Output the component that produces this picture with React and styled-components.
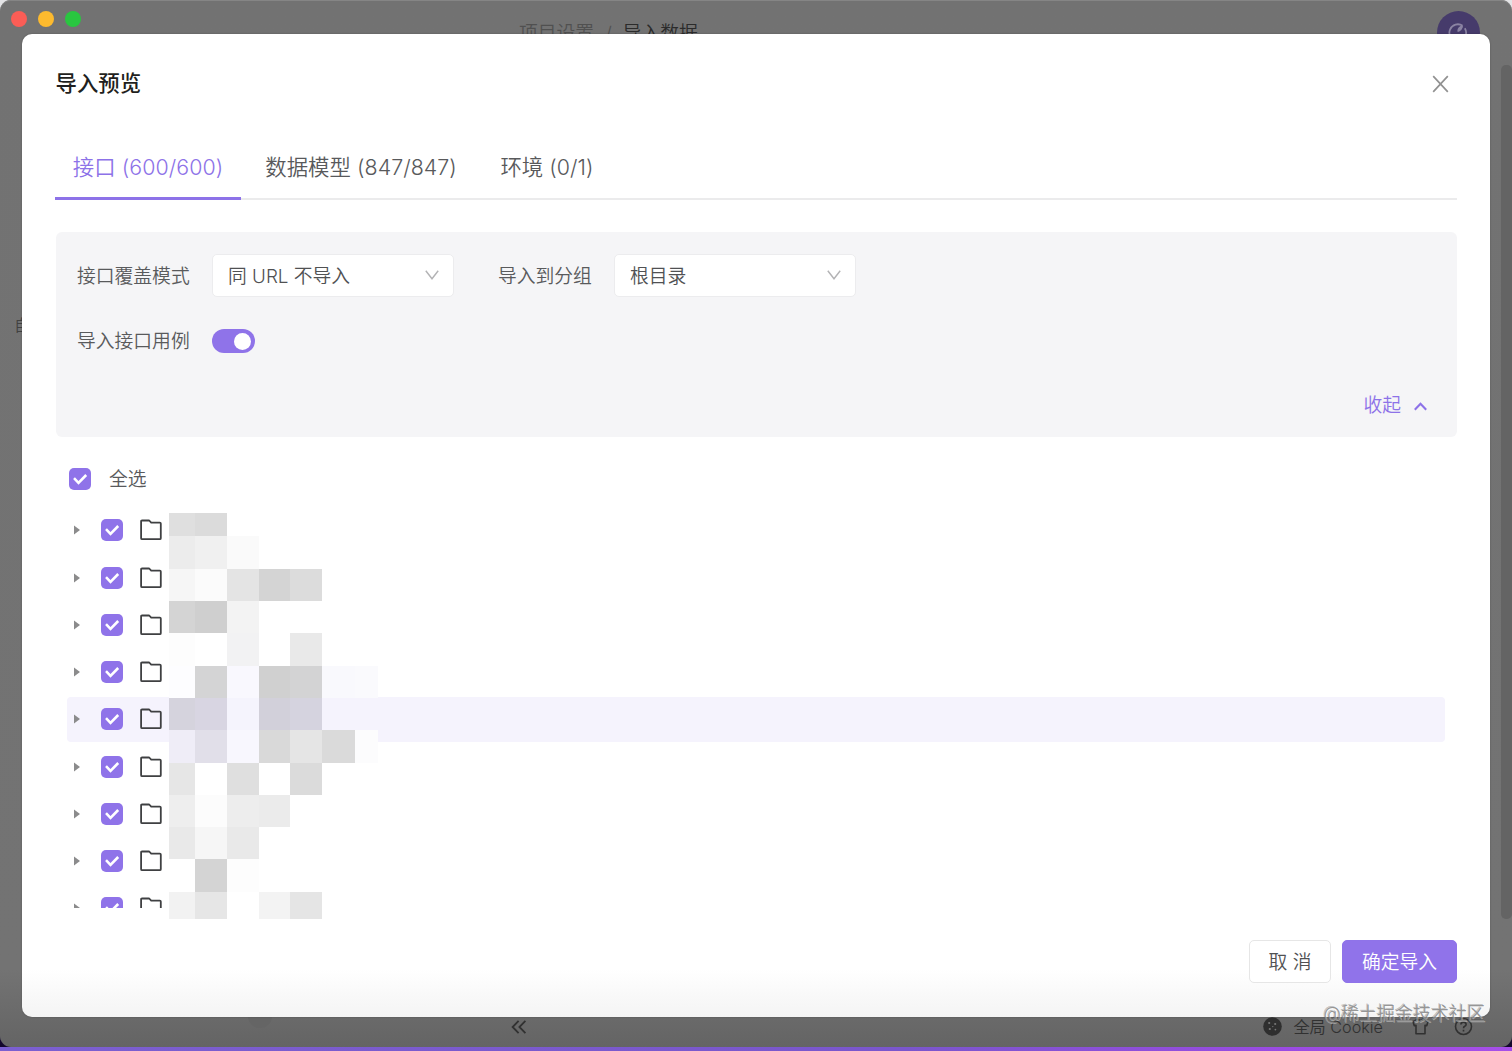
import React, { useState } from "react";
import styled, { createGlobalStyle } from "styled-components";

const GlobalStyle = createGlobalStyle`
  *, *::before, *::after { box-sizing: border-box; }
  body {
    margin: 0;
    background: #e4e4e6;
    color: #595a5c;
    font-family: Inter, "Noto Sans CJK SC", sans-serif;
    font-size: 18.8px;
    font-weight: 350;
    line-height: 28px;
    overflow: hidden;
  }
  button { font: inherit; color: inherit; margin: 0; cursor: pointer; }
  svg { display: block; flex: none; }
`;

const Desktop = styled.div`
  display: flex;
  flex-direction: column;
  width: 1512px;
  height: 1051px;
  background: linear-gradient(#e4e4e6 0 50%, #14082c 50%);
`;

const Window = styled.div`
  position: relative;
  display: flex;
  flex-direction: column;
  height: 1047px;
  border-radius: 11px;
  overflow: hidden;
  background: linear-gradient(#727272 0, #737373 970px, #646464 1047px);
  box-shadow: inset 0 1px 0 #858585;
`;

const DesktopEdge = styled.div`
  height: 4px;
  background: linear-gradient(90deg, #7b5fd0, #7a56cc 60%, #9a4be2 85%, #a64fe8);
`;

const TitleBar = styled.header`
  display: flex;
  align-items: flex-start;
  height: 65px;
  padding: 11px 32.5px 0 11px;
`;

const TrafficLights = styled.div`
  display: flex;
  gap: 11px;
  width: 508px;
`;

const Light = styled.span`
  width: 16px;
  height: 16px;
  border-radius: 50%;
  background: ${(p) => p.$color};
`;

const Breadcrumb = styled.nav`
  display: flex;
  gap: 11px;
  flex: 1;
  padding-top: 9px;
  color: #505050;
  white-space: pre;
`;

const Current = styled.span`
  color: #2b2b2b;
`;

const Avatar = styled.div`
  display: grid;
  place-items: center;
  width: 43px;
  height: 43px;
  border-radius: 50%;
  background: #463b6b;
  color: #8b84a3;
`;

const Workspace = styled.div`
  display: flex;
  justify-content: space-between;
  height: 854px;
`;

const SideLabel = styled.span`
  padding: 246px 0 0 14px;
  color: #414141;
  font-size: 16px;
`;

const Scrollbar = styled.div`
  width: 11px;
  border-radius: 5px;
  background: #646464;
`;

const StatusBar = styled.footer`
  display: flex;
  align-items: center;
  flex: 1;
  padding: 87px 39px 0 248px;
  color: #313131;
`;

const StatusDot = styled.span`
  width: 24px;
  height: 24px;
  margin: -22px 239px 0 0;
  border-radius: 50%;
  background: #656565;
`;

const StatusTools = styled.div`
  display: flex;
  align-items: center;
  margin-left: auto;
`;

const CookieLabel = styled.span`
  margin: 0 29px 0 11px;
  font-size: 16.2px;
`;

const HelpSlot = styled.span`
  margin-left: 25px;
`;

const Dialog = styled.section`
  position: absolute;
  top: 34px;
  left: 22px;
  display: flex;
  flex-direction: column;
  width: 1468px;
  height: 983px;
  padding: 34px 33px 34px 34px;
  border-radius: 10px;
  background: linear-gradient(#fff 0, #fff 935px, #f4f4f4 983px);
  box-shadow: 0 0 2px rgba(0, 0, 0, 0.25);
`;

const DialogHeader = styled.div`
  display: flex;
  align-items: center;
  justify-content: space-between;
  height: 31px;
  padding-right: 8px;
`;

const Title = styled.h1`
  margin: 0 0 2px -0.5px;
  color: #1f1f20;
  font-size: 21.4px;
  font-weight: 500;
  line-height: 30px;
`;

const CloseButton = styled.button`
  display: flex;
  padding: 0;
  border: 0;
  background: none;
  color: #919191;
`;

const Tabs = styled.div`
  display: flex;
  flex: none;
  height: 67px;
  margin: 34px 0 32px -1px;
  box-shadow: inset 0 -2px 0 #ebebec;
`;

const Tab = styled.button`
  width: ${(p) => p.$width}px;
  padding: 4px 0 0;
  border: 0;
  border-bottom: 3px solid ${(p) => (p.$active ? "#8d72e8" : "transparent")};
  background: none;
  color: ${(p) => (p.$active ? "#8d72e8" : "#58595b")};
  font-size: 21.4px;
  letter-spacing: 0.05px;
  line-height: 60px;
  white-space: nowrap;
`;

const Options = styled.div`
  display: flex;
  flex-direction: column;
  flex: none;
  height: 205px;
  padding: 21px 30px 17px 21px;
  border-radius: 6px;
  background: #f5f5f7;
`;

const OptionRow = styled.div`
  display: flex;
  align-items: center;
  height: ${(p) => p.$height}px;
`;

const OptionLabel = styled.label`
  width: ${(p) => p.$width}px;
  padding-top: 3px;
  white-space: nowrap;
`;

const Select = styled.button`
  display: flex;
  align-items: center;
  justify-content: space-between;
  width: 242px;
  height: 43px;
  margin-right: ${(p) => p.$gap || 0}px;
  padding: 0 14px 0 15px;
  border: 1px solid #ececee;
  border-radius: 5px;
  background: #fff;
  color: #505153;
`;

const SelectValue = styled.span`
  padding-top: 3px;
`;

const Switch = styled.button`
  display: flex;
  justify-content: ${(p) => (p.$on ? "flex-end" : "flex-start")};
  align-items: center;
  width: 43px;
  height: 24px;
  margin-top: 2px;
  padding: 0 4px;
  border: 0;
  border-radius: 12px;
  background: ${(p) => (p.$on ? "#8f73e9" : "#bbb")};
`;

const Knob = styled.span`
  width: 17px;
  height: 17px;
  border-radius: 50%;
  background: #fff;
`;

const Collapse = styled.button`
  display: flex;
  align-items: center;
  gap: 13px;
  margin: auto 0 0 auto;
  padding: 0;
  border: 0;
  background: none;
  color: #8d72e8;
`;

const SelectAll = styled.div`
  display: flex;
  align-items: center;
  flex: none;
  gap: 18px;
  height: 43px;
  margin: 20px 0 8px;
  padding-left: 13px;
`;

const SelectAllLabel = styled.label`
  padding-top: 2px;
`;

const Check = styled.button`
  display: grid;
  place-items: center;
  width: 22px;
  height: 22px;
  padding: 0;
  border: 0;
  border-radius: 5px;
  background: #8f73e9;
`;

const TreeArea = styled.div`
  position: relative;
  flex: none;
  height: 400px;
  padding: 0 12px 0 11px;
`;

const Tree = styled.div`
  height: 400px;
  overflow: hidden;
`;

const TreeRow = styled.div`
  display: flex;
  align-items: center;
  height: 45px;
  margin-bottom: 2.25px;
  padding: 0 0 0.5px 7px;
  border-radius: 4px;
  background: ${(p) => (p.$hovered ? "#f5f3fd" : "transparent")};
`;

const CheckSlot = styled.span`
  margin: 0 17px 0 21px;
`;

const Redaction = styled.div`
  position: absolute;
  top: 5px;
  left: 113px;
  display: grid;
  grid-template-columns: 26px 32px 32px 31px 32px 33px 23px;
  grid-template-rows: 23px 33px 32px 32px 33px 32px 32px 33px 32px 32px 32px 33px 27px;
`;

const Block = styled.span`
  background: ${(p) => p.$shade};
`;

const Actions = styled.div`
  display: flex;
  justify-content: flex-end;
  gap: 11px;
  margin-top: auto;
`;

const Button = styled.button`
  width: ${(p) => (p.$primary ? 115 : 82)}px;
  height: 43px;
  padding: 2px 0 0;
  border: 1px solid ${(p) => (p.$primary ? "#8f73e9" : "#e6e6e6")};
  border-radius: 5px;
  background: ${(p) => (p.$primary ? "#9073ea" : "#fff")};
  color: ${(p) => (p.$primary ? "#fff" : "#505153")};
`;

const Watermark = styled.span`
  position: absolute;
  top: 1000px;
  right: 27px;
  color: rgba(138, 138, 138, 0.9);
  font-size: 18px;
  text-shadow: 1px 1px 0 rgba(255, 255, 255, 0.4), -1px -1px 0 rgba(70, 70, 70, 0.3);
  white-space: nowrap;
`;

const W = "#fff";
const mosaic = [
  ["#dfdfdf", "#dbdbdb", W, W, W, W, W],
  ["#ececec", "#f0f0f0", "#fafafa", W, W, W, W],
  ["#f6f6f6", "#fbfbfb", "#e4e4e4", "#d4d4d4", "#dcdcdc", W, W],
  ["#d4d4d4", "#cfcfcf", "#f3f3f3", W, W, W, W],
  ["#fdfdfd", W, "#f2f2f3", W, "#e9e9e9", W, W],
  ["#fdfdff", "#d4d4d5", "#f9f8fe", "#d0d0d0", "#d3d3d4", "#f9f9fd", "#fafafd"],
  ["#d5d3dd", "#d8d5e2", "#f5f4fd", "#d2d0da", "#d5d3df", "#f5f3fd", "#f5f3fd"],
  ["#efedf7", "#e1dfe9", "#f8f7fe", "#d9d9d9", "#e5e5e5", "#dadada", "#fcfcfd"],
  ["#e6e6e6", W, "#dfdfdf", W, "#dbdbdb", W, W],
  ["#eeeeee", "#fcfcfc", "#ededed", "#ebebeb", W, W, W],
  ["#e9e9e9", "#f6f6f6", "#e9e9e9", W, W, W, W],
  [W, "#d4d4d4", "#fdfdfd", W, W, W, W],
  ["#f2f2f2", "#e6e6e6", W, "#f3f3f3", "#e5e5e5", W, W],
];

const Tick = () => (
  <svg width="15" height="12" viewBox="0 0 15 12" fill="none" stroke="#fff" strokeWidth="2.6">
    <path d="M1 5.2 5.5 9.8 13.2 2" />
  </svg>
);

const Folder = () => (
  <svg width="22" height="22" viewBox="0 0 22 22" fill="none" stroke="#3f4042" strokeWidth="1.8" strokeLinejoin="round">
    <path d="M2 1.5H9.2L11.2 3.6H19.8Q20.8 3.6 20.8 4.6V19.2Q20.8 20.2 19.8 20.2H2.1Q1.1 20.2 1.1 19.2V2.4Q1.1 1.5 2 1.5Z" />
  </svg>
);

const Caret = () => (
  <svg width="6" height="10" viewBox="0 0 6 10" fill="#8b8b8c">
    <path d="M0 0.4 6 5 0 9.6Z" />
  </svg>
);

const Down = () => (
  <svg width="14" height="10" viewBox="0 0 14 10" fill="none" stroke="#b3b3b5" strokeWidth="1.4">
    <path d="M0.8 0.7 7 8.8 13.2 0.7" />
  </svg>
);

export default function App() {
  const [tab, setTab] = useState(0);
  const [cases, setCases] = useState(true);
  const tabs = [
    { label: "接口 (600/600)", width: 186 },
    { label: "数据模型 (847/847)", width: 240 },
    { label: "环境 (0/1)", width: 132 },
  ];

  return (
    <Desktop>
      <GlobalStyle />
      <Window>
        <TitleBar>
          <TrafficLights>
            <Light $color="#fb5d56" />
            <Light $color="#fdba2e" />
            <Light $color="#29c640" />
          </TrafficLights>
          <Breadcrumb>
            <span>项目设置</span>
            <span>/</span>
            <Current>导入数据</Current>
          </Breadcrumb>
          <Avatar>
            <svg width="20" height="20" viewBox="0 0 20 20" fill="none" stroke="currentColor" strokeWidth="1.8">
              <path d="M14.6 2.8A8.4 8.4 0 1 0 18.2 10Q18.2 7.4 16.8 5.2M10.4 8.6Q9.6 5.2 14.6 2.8M10.6 8Q13 7 14.2 3.4" />
            </svg>
          </Avatar>
        </TitleBar>
        <Workspace>
          <SideLabel>自动</SideLabel>
          <Scrollbar />
        </Workspace>
        <StatusBar>
          <StatusDot />
          <svg width="16" height="14" viewBox="0 0 16 14" fill="none" stroke="currentColor" strokeWidth="1.8">
            <path d="M7.6 0.8 1.6 7 7.6 13.2M14.4 0.8 8.4 7 14.4 13.2" />
          </svg>
          <StatusTools>
            <svg width="19" height="19" viewBox="0 0 19 19">
              <circle cx="9.5" cy="9.5" r="9.3" fill="#2f2f2f" />
              <g fill="#777">
                <circle cx="6.2" cy="6" r="1.1" />
                <circle cx="12.2" cy="7" r="1.1" />
                <circle cx="6.8" cy="12" r="1.1" />
                <circle cx="12.4" cy="12.6" r="0.9" />
                <circle cx="9.8" cy="9.6" r="0.7" />
              </g>
            </svg>
            <CookieLabel>全局 Cookie</CookieLabel>
            <svg width="17" height="17" viewBox="0 0 17 17" fill="none" stroke="currentColor" strokeWidth="1.6" strokeLinejoin="round">
              <path d="M5.6 1.2Q8.5 3.8 11.4 1.2L16 3.6 14.8 7.6 13 7.2V15.8H4V7.2L2.2 7.6 1 3.6Z" />
            </svg>
            <HelpSlot>
              <svg width="19" height="19" viewBox="0 0 19 19" fill="none" stroke="currentColor" strokeWidth="1.6">
                <circle cx="9.5" cy="9.5" r="8" />
                <path d="M6.9 7.5Q7 5.1 9.5 5.1T12.1 7.4Q12.1 8.6 10.7 9.3 9.5 9.9 9.5 11.3M9.5 12.8V14.5" />
              </svg>
            </HelpSlot>
          </StatusTools>
        </StatusBar>

        <Dialog>
          <DialogHeader>
            <Title>导入预览</Title>
            <CloseButton aria-label="关闭">
              <svg width="17" height="18" viewBox="0 0 17 18" fill="none" stroke="currentColor" strokeWidth="1.7">
                <path d="M1.2 1.2 15.8 16.8M15.8 1.2 1.2 16.8" />
              </svg>
            </CloseButton>
          </DialogHeader>
          <Tabs>
            {tabs.map((t, i) => (
              <Tab key={t.label} $width={t.width} $active={tab === i} onClick={() => setTab(i)}>
                {t.label}
              </Tab>
            ))}
          </Tabs>

          <Options>
            <OptionRow $height={44}>
              <OptionLabel $width={135}>接口覆盖模式</OptionLabel>
              <Select $gap={44}>
                <SelectValue>同 URL 不导入</SelectValue>
                <Down />
              </Select>
              <OptionLabel $width={116}>导入到分组</OptionLabel>
              <Select>
                <SelectValue>根目录</SelectValue>
                <Down />
              </Select>
            </OptionRow>
            <OptionRow $height={86}>
              <OptionLabel $width={135}>导入接口用例</OptionLabel>
              <Switch $on={cases} onClick={() => setCases(!cases)} aria-label="导入接口用例">
                <Knob />
              </Switch>
            </OptionRow>
            <Collapse>
              收起
              <svg width="13" height="9" viewBox="0 0 13 9" fill="none" stroke="currentColor" strokeWidth="2.1">
                <path d="M0.8 7.8 6.5 1.8 12.2 7.8" />
              </svg>
            </Collapse>
          </Options>

          <SelectAll>
            <Check aria-label="全选">
              <Tick />
            </Check>
            <SelectAllLabel>全选</SelectAllLabel>
          </SelectAll>

          <TreeArea>
            <Tree>
              {Array.from({ length: 9 }, (_, i) => (
                <TreeRow key={i} $hovered={i === 4}>
                  <Caret />
                  <CheckSlot>
                    <Check>
                      <Tick />
                    </Check>
                  </CheckSlot>
                  <Folder />
                </TreeRow>
              ))}
            </Tree>
            <Redaction>
              {mosaic.flatMap((row, r) => row.map((shade, c) => <Block key={`${r}-${c}`} $shade={shade} />))}
            </Redaction>
          </TreeArea>

          <Actions>
            <Button>取 消</Button>
            <Button $primary>确定导入</Button>
          </Actions>
        </Dialog>
        <Watermark>@稀土掘金技术社区</Watermark>
      </Window>
      <DesktopEdge />
    </Desktop>
  );
}
